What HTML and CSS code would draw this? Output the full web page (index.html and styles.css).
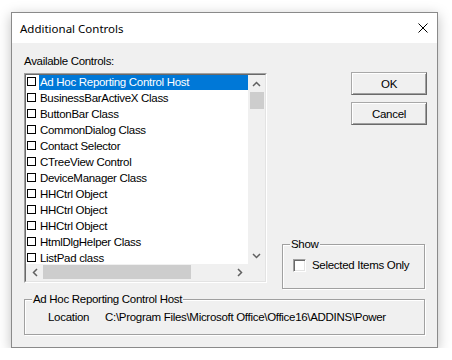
FILE: index.html
```html
<!DOCTYPE html>
<html>
<head>
<meta charset="utf-8">
<link rel="stylesheet" href="styles.css">
</head>
<body>
<div class="window">
  <div class="titlebar">
    <span class="title">Additional Controls</span>
    <span class="close"><svg width="10" height="10" viewBox="0 0 10 10"><path d="M0.5 0.5 L9.5 9.5 M9.5 0.5 L0.5 9.5" stroke="#000" stroke-width="1" fill="none"/></svg></span>
  </div>
  <div class="content">
    <div class="top">
      <div class="left">
        <div class="caption">Available Controls:</div>
        <div class="listbox">
          <div class="listinner">
            <div class="items">
              <div class="row sel"><span class="cb"></span><span class="name">Ad Hoc Reporting Control Host</span></div>
              <div class="row"><span class="cb"></span><span class="name">BusinessBarActiveX Class</span></div>
              <div class="row"><span class="cb"></span><span class="name">ButtonBar Class</span></div>
              <div class="row"><span class="cb"></span><span class="name">CommonDialog Class</span></div>
              <div class="row"><span class="cb"></span><span class="name">Contact Selector</span></div>
              <div class="row"><span class="cb"></span><span class="name">CTreeView Control</span></div>
              <div class="row"><span class="cb"></span><span class="name">DeviceManager Class</span></div>
              <div class="row"><span class="cb"></span><span class="name">HHCtrl Object</span></div>
              <div class="row"><span class="cb"></span><span class="name">HHCtrl Object</span></div>
              <div class="row"><span class="cb"></span><span class="name">HHCtrl Object</span></div>
              <div class="row"><span class="cb"></span><span class="name">HtmlDlgHelper Class</span></div>
              <div class="row"><span class="cb"></span><span class="name">ListPad class</span></div>
            </div>
            <div class="vscroll">
              <div class="arrow"><svg width="9" height="6" viewBox="0 0 9 6"><polyline points="1,5 4.5,1.5 8,5" fill="none" stroke="#606060" stroke-width="1.5"/></svg></div>
              <div class="vthumb"></div>
              <div class="spacer"></div>
              <div class="arrow"><svg width="9" height="6" viewBox="0 0 9 6"><polyline points="1,1 4.5,4.5 8,1" fill="none" stroke="#606060" stroke-width="1.5"/></svg></div>
            </div>
            <div class="hscroll">
              <div class="arrow"><svg width="6" height="9" viewBox="0 0 6 9"><polyline points="5,1 1.5,4.5 5,8" fill="none" stroke="#606060" stroke-width="1.5"/></svg></div>
              <div class="hthumb"></div>
              <div class="spacer"></div>
              <div class="arrow"><svg width="6" height="9" viewBox="0 0 6 9"><polyline points="1,1 4.5,4.5 1,8" fill="none" stroke="#606060" stroke-width="1.5"/></svg></div>
            </div>
            <div class="corner"></div>
          </div>
        </div>
      </div>
      <div class="right">
        <button class="btn">OK</button>
        <button class="btn">Cancel</button>
        <div class="group show">
          <span class="legend">Show</span>
          <label class="chk"><span class="box3d"></span>Selected Items Only</label>
        </div>
      </div>
    </div>
    <div class="group info">
      <span class="legend">Ad Hoc Reporting Control Host</span>
      <div class="loc"><span class="loc-key">Location</span><span>C:\Program Files\Microsoft Office\Office16\ADDINS\Power</span></div>
    </div>
  </div>
</div>
</body>
</html>
```
FILE: styles.css
```css
body {
  margin: 0;
  background: #fff;
  font-family: "Liberation Sans", Arial, sans-serif;
  font-size: 11.5px;
  letter-spacing: -0.3px;
  color: #000;
}
.window {
  margin: 12px 0 0 11px;
  width: 427px;
  height: 336px;
  box-sizing: border-box;
  border: 1px solid #8a8a8a;
  background: #f0f0f0;
  box-shadow: 0 3px 12px rgba(0, 0, 0, 0.25);
  display: flex;
  flex-direction: column;
}
.titlebar {
  flex: none;
  height: 30px;
  background: #fff;
  display: flex;
  align-items: center;
  padding: 0 9px 0 8px;
}
.title {
  flex: 1;
  font-family: "Noto Sans", "Open Sans", sans-serif;
  font-size: 11.5px;
  letter-spacing: 0;
  color: #000;
}
.close {
  display: flex;
}
.content {
  padding: 11px 10px 0 12px;
}
.top {
  display: flex;
  height: 235px;
}
.left {
  width: 243px;
  display: flex;
  flex-direction: column;
}
.caption {
  height: 14px;
  line-height: 14px;
  margin-bottom: 5px;
}
.listbox {
  height: 210px;
  box-sizing: border-box;
  border: 1px solid;
  border-color: #a0a0a0 #fff #fff #a0a0a0;
}
.listinner {
  height: 100%;
  box-sizing: border-box;
  border: 1px solid;
  border-color: #696969 #e3e3e3 #e3e3e3 #696969;
  background: #fff;
  display: grid;
  grid-template-columns: 1fr 17px;
  grid-template-rows: 1fr 17px;
  overflow: hidden;
}
.items {
  overflow: hidden;
  min-height: 0;
}
.row {
  height: 16px;
  display: flex;
  align-items: flex-start;
}
.cb {
  flex: none;
  width: 9px;
  height: 9px;
  box-sizing: border-box;
  border: 1px solid #000;
  background: #fff;
  margin: 2px 3px 0 1px;
}
.name {
  flex: 1;
  height: 15px;
  line-height: 15px;
  padding-left: 1px;
  white-space: nowrap;
}
.row.sel .name {
  background: #0078d7;
  color: #fff;
}
.vscroll {
  background: #f0f0f0;
  display: flex;
  flex-direction: column;
  min-height: 0;
}
.arrow {
  flex: none;
  height: 17px;
  display: flex;
  align-items: center;
  justify-content: center;
}
.vthumb {
  flex: none;
  height: 17px;
  margin: 0 1px 0 2px;
  background: #cdcdcd;
}
.spacer {
  flex: 1;
}
.hscroll {
  background: #f0f0f0;
  display: flex;
}
.hscroll .arrow {
  width: 17px;
  height: auto;
}
.hthumb {
  flex: none;
  width: 148px;
  margin: 1px 0 2px 0;
  background: #cdcdcd;
}
.corner {
  background: #f0f0f0;
}
.right {
  flex: 1;
  display: flex;
  flex-direction: column;
  align-items: flex-end;
  padding-top: 18px;
}
.btn {
  width: 76px;
  height: 23px;
  margin: 0 0 7px 0;
  padding: 0;
  font: inherit;
  letter-spacing: inherit;
  color: #000;
  background: #f0f0f0;
  border: 1px solid;
  border-color: #a8a8a8 #6a6a6a #6a6a6a #a8a8a8;
  box-shadow: inset 1px 1px 0 #fff, inset -1px -1px 0 #a0a0a0;
}
.group {
  box-sizing: border-box;
  border: 1px solid #a0a0a0;
  box-shadow: 1px 1px 0 #fff, inset 1px 1px 0 #fff;
}
.legend {
  display: block;
  width: max-content;
  height: 13px;
  line-height: 13px;
  margin: -7px 0 0 7px;
  padding: 0 1px;
  background: #f0f0f0;
}
.show {
  margin-top: auto;
  margin-right: 2px;
  width: 143px;
  height: 45px;
}
.chk {
  display: flex;
  align-items: center;
  margin: 8px 0 0 10px;
  line-height: 13px;
}
.box3d {
  flex: none;
  width: 13px;
  height: 13px;
  box-sizing: border-box;
  border: 1px solid;
  border-color: #a0a0a0 #fff #fff #a0a0a0;
  box-shadow: inset 1px 1px 0 #696969, inset -1px -1px 0 #e3e3e3;
  background: #fff;
  margin-right: 6px;
}
.info {
  margin-top: 10px;
  width: 401px;
  height: 36px;
}
.loc {
  display: flex;
  margin: 5px 0 0 23px;
  line-height: 13px;
  white-space: nowrap;
}
.loc-key {
  width: 57px;
  flex: none;
}
```
